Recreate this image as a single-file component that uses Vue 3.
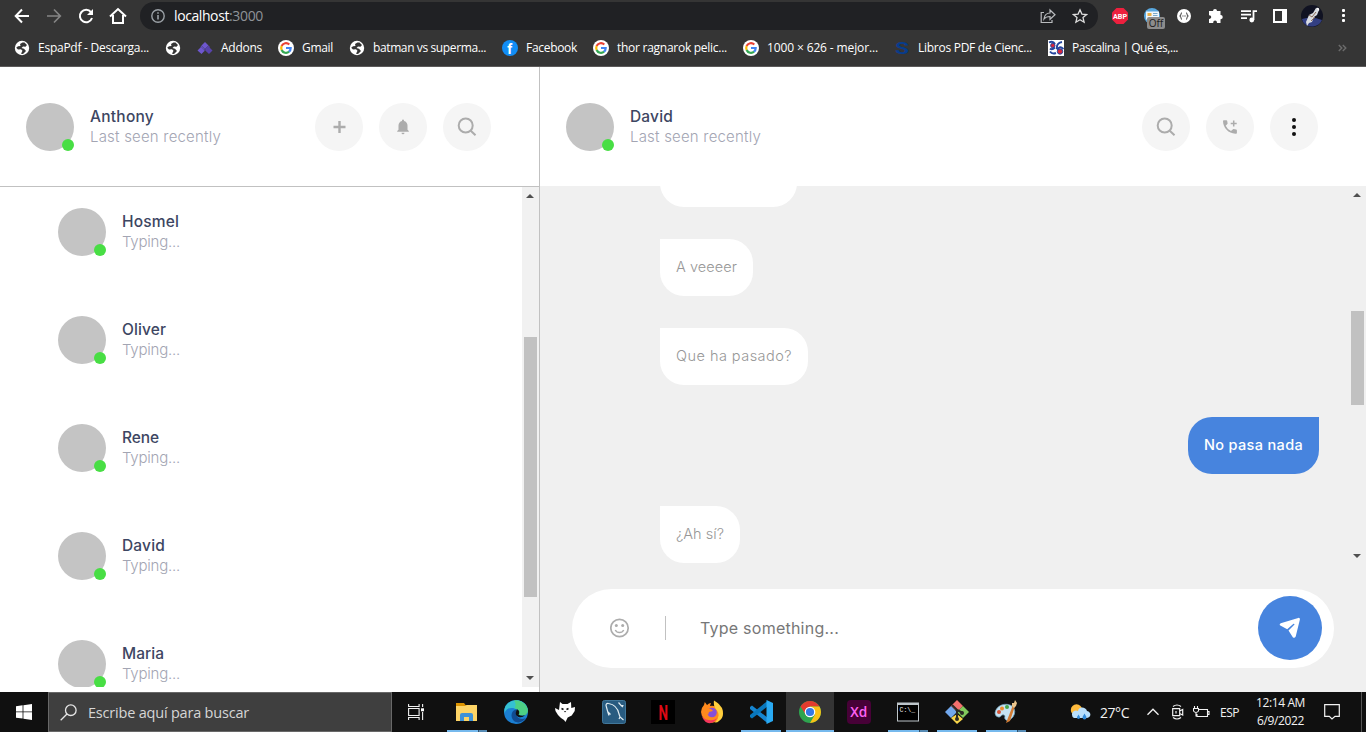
<script setup>
// Spreads a label's letters so that it fills a given width in pixels.
const vFit = {
  mounted(el, { value }) {
    const natural = el.getBoundingClientRect().width
    const count = [...el.textContent].length
    el.style.letterSpacing = (value - natural) / count + 'px'
    el.style.width = value + 'px'
  }
}

const bookmarks = [
  { icon: 'globe', text: 'EspaPdf - Descarga...', w: 111 },
  { icon: 'globe' },
  { icon: 'addons', text: 'Addons', w: 41 },
  { icon: 'google', text: 'Gmail', w: 31 },
  { icon: 'globe', text: 'batman vs superma...', w: 113 },
  { icon: 'facebook', text: 'Facebook', w: 51 },
  { icon: 'google', text: 'thor ragnarok pelic...', w: 110 },
  { icon: 'google', text: '1000 × 626 - mejor...', w: 111 },
  { icon: 'books', text: 'Libros PDF de Cienc...', w: 114 },
  { icon: 'pascal', text: 'Pascalina | Qué es,...', w: 106 }
]

const contacts = [
  { name: 'Hosmel', w: 57 },
  { name: 'Oliver', w: 44 },
  { name: 'Rene', w: 37 },
  { name: 'David', w: 43 },
  { name: 'Maria', w: 42 }
]

const messages = [
  { text: 'A veeeer', w: 61 },
  { text: 'Que ha pasado?', w: 116 },
  { text: 'No pasa nada', w: 99, mine: true },
  { text: '¿Ah sí?', w: 48 }
]

const apps = [
  { id: 'explorer', state: 'multi' },
  { id: 'edge' },
  { id: 'fox' },
  { id: 'mysql' },
  { id: 'netflix' },
  { id: 'firefox' },
  { id: 'vscode', state: 'open' },
  { id: 'chrome', state: 'active' },
  { id: 'xd' },
  { id: 'cmd', state: 'multi' },
  { id: 'git', state: 'open' },
  { id: 'paint', state: 'multi' }
]
</script>

<template>
  <div class="screen">
    <header class="browser">
      <div class="toolbar">
        <div class="nav">
          <svg width="16" height="16" viewBox="0 0 16 16" fill="none" stroke="#fff" stroke-width="2"><path d="M15 8H2M8 1.500 1.700 8 8 14.500" /></svg>
          <svg width="16" height="16" viewBox="0 0 16 16" fill="none" stroke="#858585" stroke-width="1.700"><path d="M1 8h13M8 1.500 14.300 8 8 14.500" /></svg>
          <svg width="16" height="16" viewBox="0 0 16 16"><path d="M13 4.200A6.200 6.200 0 1 0 14 10" fill="none" stroke="#fff" stroke-width="2" /><path d="M15 1v6H9z" fill="#fff" /></svg>
          <svg class="home" width="18" height="18" viewBox="0 0 18 18" fill="none" stroke="#fff" stroke-width="2"><path d="M1 9.500 9 2l8 7.500M4 8v8h10V8" /></svg>
        </div>
        <div class="address">
          <svg width="14" height="14" viewBox="0 0 14 14"><circle cx="7" cy="7" r="6.200" fill="none" stroke="#9aa0a6" stroke-width="1.400" /><path d="M7 6v4.500M7 3.200v1.600" stroke="#9aa0a6" stroke-width="1.600" /></svg>
          <span class="url"><span v-fit="55" class="fit">localhost</span><span v-fit="34" class="fit port">:3000</span></span>
          <svg class="share" width="16" height="16" viewBox="0 0 16 16" fill="none" stroke="#b9bbbe" stroke-width="1.200"><path d="M4 4.500H1.200v10H12V12" /><path d="M4 11c.5-4 2.500-6 6-6V2l5 4.800-5 4.500V8.500C7.500 8.500 5.500 9 4 11z" /></svg>
          <svg class="star" width="16" height="16" viewBox="0 0 16 16" fill="none" stroke="#dedede" stroke-width="1.300"><path d="m8 1.800 1.900 4.300 4.700.4-3.600 3.100 1.100 4.600L8 11.800l-4.100 2.400L5 9.600 1.400 6.500l4.700-.4z" /></svg>
        </div>
        <div class="extensions">
          <svg width="18" height="18" viewBox="0 0 18 18"><path d="M5.500 1h7L17 5.500v7L12.500 17h-7L1 12.500v-7z" fill="#ee203e" /><text x="2" y="11.900" textLength="14" lengthAdjust="spacingAndGlyphs" font-size="8" font-weight="700" font-family="Roboto, sans-serif" fill="#fff">ABP</text></svg>
          <div class="blocker">
            <svg width="18" height="18" viewBox="0 0 18 18"><circle cx="9" cy="9" r="8" fill="#5aa9e0" /><rect x="3" y="4.500" width="13" height="8" fill="#eef6fb" /><path d="M4.500 6h4v3h-4z" fill="#e9b04a" /><path d="M10 6.500h4.500M10 8.500h4.500" stroke="#7aa8c8" /></svg>
            <span>Off</span>
          </div>
          <svg width="16" height="16" viewBox="0 0 16 16"><circle cx="8" cy="8" r="7" fill="#fff" /><path d="M6 4.700C4.700 4.700 5.500 7 4 8c1.500 1 .7 3.300 2 3.300M10 4.700c1.300 0 .5 2.300 2 3.300-1.500 1-.7 3.300-2 3.300" fill="none" stroke="#555" stroke-width="1.100" /><path d="M6.300 8h3.500" stroke="#555" stroke-dasharray="1 .4" /></svg>
          <svg width="16" height="16" viewBox="0 0 16 16"><path d="M5 3a2 2 0 0 1 4 0h3.500v4a2 2 0 0 1 .3 4.200l-.3 0V15H9c.2-3.300-4-3.300-3.800 0H1v-4c3 .1 3-3.800 0-3.700V3z" fill="#fff" /></svg>
          <svg width="17" height="16" viewBox="0 0 17 16"><path d="M1 3.200h10M1 6.700h10M1 10.200h6" stroke="#fff" stroke-width="1.700" /><path d="M13.500 12V3.200H17" fill="none" stroke="#fff" stroke-width="1.800" /><circle cx="11.800" cy="12" r="2.400" fill="#fff" /></svg>
          <svg width="14" height="14" viewBox="0 0 14 14"><path d="M0 0h14v14H0z" fill="#fff" /><path d="M2 2h7v10H2z" fill="#353535" /></svg>
          <svg width="22" height="22" viewBox="0 0 22 22"><circle cx="11" cy="11" r="11" fill="#101222" /><path d="M1 14q10-3 20 1a11 11 0 0 1-19 2z" fill="#333f82" /><path d="m5 17 3-7 4-2 3-5 3 2-2 5-3 2-2 5-3 1-2 3z" fill="#d9dce2" /><path d="m8 10 3 2 4-5M10 16l4-4" stroke="#8e6d57" fill="none" /><path d="M15 3q4-1 3 3" fill="#fff" /></svg>
          <svg width="4" height="14" viewBox="0 0 4 14" fill="#fff"><rect y="0" width="3" height="3" rx="1" /><rect y="5" width="3" height="3" rx="1" /><rect y="10" width="3" height="3" rx="1" /></svg>
        </div>
      </div>

      <div class="bookmarks">
        <div v-for="(b, i) in bookmarks" :key="i" class="bookmark">
          <svg width="16" height="16" viewBox="0 0 16 16">
            <template v-if="b.icon === 'globe'">
              <circle cx="8" cy="8" r="7.200" fill="#fff" />
              <path d="M8.500 2.500 6 4 6.500 6 4 6.200 2.200 7.800 4 9.500l3-.2 1.500 1.500-1.500 3 2 .3 3-3-2-2.300L7.500 8 9 6.500l2.500.2L13 5l-2.500-2.500z" fill="#353535" />
            </template>
            <template v-else-if="b.icon === 'addons'">
              <path d="m8 2 3.500 3.500L8 9 4.500 5.500z" fill="#6e57cf" /><path d="m4 7 3.800 3.800L4.500 14 .5 10.500z" fill="#6e57cf" /><path d="m12 7 3.500 3.500L12 14 8.200 10.500z" fill="#5843ac" /><path d="M4.500 5.500 8 9l-1 1.500L3.500 7z" fill="#6250bb" /><path d="m8 9 3.500-3.500L13 7l-4 4z" fill="#5843ac" />
            </template>
            <template v-else-if="b.icon === 'google'">
              <circle cx="8" cy="8" r="8" fill="#fff" />
              <g fill="none" stroke-width="2.200">
                <path d="M11.300 4.500A4.800 4.800 0 0 0 3.600 6" stroke="#ea4335" />
                <path d="M3.700 5.900a4.800 4.800 0 0 0 0 4.200" stroke="#fbbc05" />
                <path d="M3.600 10a4.800 4.800 0 0 0 7.500 1.700" stroke="#34a853" />
                <path d="M11 11.700A4.800 4.800 0 0 0 12.700 8H8" stroke="#4285f4" />
              </g>
            </template>
            <template v-else-if="b.icon === 'facebook'">
              <circle cx="8" cy="8" r="8" fill="#118df5" />
              <text x="5.200" y="13.500" font-size="14" font-weight="700" font-family="Roboto, sans-serif" fill="#fff">f</text>
            </template>
            <template v-else-if="b.icon === 'books'">
              <text x="1" y="13.800" font-size="16.500" font-weight="700" textLength="14" lengthAdjust="spacingAndGlyphs" font-family="Roboto, sans-serif" fill="#083c8c">S</text>
            </template>
            <template v-else>
              <path d="M0 0h16v16H0z" fill="#fff" />
              <path d="M1 2.500q4-2 6 1.500M2 8.500q2 2 5-1M9 9q-1-6 5-7M15.500 9q-4-4-6 1M2 11.500q2 3 6 1.500" fill="none" stroke="#24459e" stroke-width="1.900" />
              <circle cx="4.800" cy="5.500" r="2.200" fill="#d7263d" stroke="#24459e" /><circle cx="12" cy="11.500" r="2.700" fill="#d7263d" stroke="#24459e" />
            </template>
          </svg>
          <span v-if="b.text" v-fit="b.w" class="fit">{{ b.text }}</span>
        </div>
        <svg class="more" width="9" height="8" viewBox="0 0 9 8" fill="none" stroke="#6c6c6c" stroke-width="1.400"><path d="m.8 1 3 3-3 3M4.800 1l3 3-3 3" /></svg>
      </div>
    </header>

    <main class="app">
      <section class="sidebar">
        <div class="head">
          <div class="avatar"><i /></div>
          <div class="who">
            <span v-fit="64" class="fit name">Anthony</span>
            <span v-fit="131" class="fit status">Last seen recently</span>
          </div>
          <div class="actions">
            <button><svg width="14" height="14" viewBox="0 0 14 14"><path d="M7.500 1v12M1.500 7h12" stroke="#acacac" stroke-width="2.400" /></svg></button>
            <button><svg width="14" height="16" viewBox="0 0 14 16" fill="#acacac"><path d="M7 .5a1 1 0 0 1 1 1v.4c2.200.5 3.500 2.300 3.500 4.600v4.300l1.300 1.300v.7H1.200v-.7l1.300-1.300V6.500c0-2.300 1.300-4.100 3.500-4.600v-.4a1 1 0 0 1 1-1zM5.500 13.700h3a1.500 1.500 0 0 1-3 0z" /></svg></button>
            <button><svg width="20" height="20" viewBox="0 0 20 20" fill="none" stroke="#acacac" stroke-width="2"><circle cx="8.700" cy="8.500" r="7" /><path d="m13.500 13.500 5 4.700" /></svg></button>
          </div>
        </div>
        <div class="contacts">
          <div class="list">
            <div v-for="c in contacts" :key="c.name" class="contact">
              <div class="avatar"><i /></div>
              <div class="who">
                <span v-fit="c.w" class="fit name">{{ c.name }}</span>
                <span v-fit="58" class="fit status">Typing...</span>
              </div>
            </div>
          </div>
          <div class="scrollbar contacts-bar"><b class="up" /><div class="thumb" /><b class="down" /></div>
        </div>
      </section>

      <section class="conversation">
        <div class="head">
          <div class="avatar"><i /></div>
          <div class="who">
            <span v-fit="43" class="fit name">David</span>
            <span v-fit="131" class="fit status">Last seen recently</span>
          </div>
          <div class="actions">
            <button><svg width="20" height="20" viewBox="0 0 20 20" fill="none" stroke="#acacac" stroke-width="2"><circle cx="8.700" cy="8.500" r="7" /><path d="m13.500 13.500 5 4.700" /></svg></button>
            <button><svg width="16" height="16" viewBox="0 0 16 16"><path d="M1.800 1.300h2.600q.7 0 .8.700l.4 2.200q.1.500-.3.900L3.700 6.700q1.600 3.400 5.300 5.400l1.700-1.700q.4-.4.900-.3l2.500.5q.8.100.8.800v2.500q0 .7-.8.800C7 15.200 1 9 1 2.100q0-.8.800-.8z" fill="#acacac" /><path d="M11.700 1.500v6M8.700 4.500h6" stroke="#acacac" stroke-width="1.500" /></svg></button>
            <button><svg width="6" height="20" viewBox="0 0 6 20" fill="#111"><circle cx="3" cy="3" r="2" /><circle cx="3" cy="10" r="2" /><circle cx="3" cy="17" r="2" /></svg></button>
          </div>
        </div>
        <div class="chat">
          <div class="messages">
            <div class="bubble partial" />
            <div v-for="m in messages" :key="m.text" class="bubble" :class="{ mine: m.mine }"><span v-fit="m.w" class="fit">{{ m.text }}</span></div>
          </div>
          <div class="scrollbar chat-bar"><b class="up" /><div class="thumb" /><b class="down" /></div>
        </div>
        <div class="composer">
          <svg class="smile" width="20" height="20" viewBox="0 0 20 20" fill="none" stroke="#acacac" stroke-width="1.700"><circle cx="9.500" cy="10" r="8.700" /><path d="M5.300 12a4.700 4.700 0 0 0 8.400 0" stroke-width="1.500" /><g fill="#acacac" stroke="none"><circle cx="6.300" cy="7.500" r="1.500" /><circle cx="12.700" cy="7.500" r="1.500" /></g></svg>
          <div class="divider" />
          <span v-fit="139" class="fit placeholder">Type something...</span>
          <div class="send"><svg width="22" height="22" viewBox="0 0 22 22" fill="#fff"><path d="M1.700 6.200 19.200.9q1.900-.4 1.700 1.500L16.700 19.500q-1.200 2.200-2.900.7L9.500 13.600l6-6.100q0-1-1-.8L8.200 12.300.9 8.300q-.8-1.300.8-2.100z" /></svg></div>
        </div>
      </section>
    </main>

    <footer class="taskbar">
      <div class="start"><svg width="16" height="16" viewBox="0 0 16 16" fill="#fff"><path d="M0 2.300 6.600 1.300v6.200H0zM7.400 1.200 16 0v7.500H7.400zM0 8.300h6.600v6.300L0 13.700zM7.400 8.300H16V16l-8.600-1.200z" /></svg></div>
      <div class="search">
        <svg width="17" height="17" viewBox="0 0 17 17" fill="none" stroke="#e6e6e6" stroke-width="1.300"><circle cx="10.800" cy="6.200" r="5.300" /><path d="M7 10 .7 16.300" /></svg>
        <span v-fit="161" class="fit">Escribe aquí para buscar</span>
      </div>
      <div class="taskview"><svg width="17" height="16" viewBox="0 0 17 16" fill="none" stroke="#f2f2f2" stroke-width="1.100"><path d="M.6 0v2.500h10.500V0M.6 4.500h10.500v7H.6zM.6 16v-2.500h10.500V16M14.600 0v3M14.600 8v8" /><path d="M13 4.300h3v3h-3z" fill="#fff" stroke="none" /></svg></div>
      <div class="apps">
        <div v-for="a in apps" :key="a.id" class="slot" :class="a.state">
          <svg width="24" height="24" viewBox="0 0 24 24">
            <template v-if="a.id === 'explorer'">
              <path d="M1 3h8l1.500 2H22v4H1z" fill="#dc9300" /><path d="M1 6h9l2-1h10v16H1z" fill="#fdd466" /><path d="M5 21v-6q0-2 2-2h9q2 0 2 2v6h-4v-4H9v4z" fill="#3e92d8" />
            </template>
            <template v-else-if="a.id === 'edge'">
              <circle cx="12" cy="12" r="12" fill="#1b7fd2" />
              <path d="M.5 9C3-2 20-3 23.500 8c1.500 5-4 9-9 6.500 1-2 .5-4-1.500-5C9 7 3 7 .5 13z" fill="#35c1d2" />
              <path d="M10 .2c9-.8 15 7 13.800 12-1.300 4-6 4-9.300 2.500 2-3-1-6-4-6.500Q13 4 10 .2z" fill="#56d66b" opacity=".75" />
              <path d="M13.500 9.500c-6-.5-8 7-3.500 11.500 4 3 9 1 12-3-6 3-12-1-8.500-8.500z" fill="#114b91" />
              <path d="M13.500 9.500q3 2 1 5.200 3 1.600 6.500.6-3 3-7 1.500-4-2-1-7.300z" fill="#111" />
            </template>
            <template v-else-if="a.id === 'fox'">
              <path d="m7 2 2.500 2h5L18 2l.3 6 3.700-1-.3 4-3 4.500-4 2-2.200 4.500-1.500-2-3-2-3-3-2.500-4L2 8l4 2z" fill="#fff" /><path d="m8.500 8.500 2 1M13.500 9.500l2-1" stroke="#111" stroke-width="1.500" /><path d="M11 11h2.200L12 12.500z" fill="#111" />
            </template>
            <template v-else-if="a.id === 'mysql'">
              <rect x=".5" y=".5" width="23" height="23" rx="2" fill="#285b80" stroke="#41779a" /><path d="M7 15.500 5.800 12 4 5.500Q4 3 6.500 3.500C13 4.500 16 9 17 14l1 3 3.500 3M18 17l-1 2M6 12l2.500 2.500M16.500 2.500l2.500 3h2.500M19 5.500l2 1.500" fill="none" stroke="#e1ecf1" stroke-width="1.200" />
            </template>
            <template v-else-if="a.id === 'netflix'">
              <path d="M0 0h24v24H0z" fill="#000" /><text x="7.400" y="19.500" font-size="21" font-weight="700" textLength="9.500" lengthAdjust="spacingAndGlyphs" font-family="Roboto, sans-serif" fill="#df0914">N</text>
            </template>
            <template v-else-if="a.id === 'firefox'">
              <path d="M1 12Q1 8 4 5l.8-3L7 5q2-2 4-2l-1 3q6-1 9 4l3-1q2 7-3 11-6 5-13 1-4-3-5-9z" fill="#ff8a1d" /><path d="M14 .5q5 3 6 5l2 2.500q3 9-3 13-2 2-4 1.500 6-6 2-12-4-4-3-10z" fill="#ffcf3d" /><path d="M1 12q1 8 8 8 5 1 8-2-3 6-9 5-6-2-7-11z" fill="#f5375b" /><circle cx="12" cy="12.500" r="4.800" fill="#8650d8" /><path d="m5 8 6 1 2 2-4 1-1 3q-3-3-3-7z" fill="#ff8a1d" />
            </template>
            <template v-else-if="a.id === 'vscode'">
              <path d="m1 7 2-1.500L19 18v5.500L1 9z" fill="#1685d0" /><path d="m1 17 2 1.500L19 6V.5L1 15z" fill="#0877bd" /><path d="m17.500 0 6.500 3v18l-6.500 3z" fill="#29a9f2" />
            </template>
            <template v-else-if="a.id === 'chrome'">
              <g transform="translate(1 1)"><circle cx="11" cy="11" r="11" fill="#2ea44f" /><path d="M1.500 5.500a11 11 0 0 1 19 0H11L7 14z" fill="#e33b2e" /><path d="M20.500 5.500A11 11 0 0 1 11 22l5-8.500-5-8z" fill="#fbc116" /><circle cx="11" cy="11" r="5.300" fill="#fff" /><circle cx="11" cy="11" r="4.100" fill="#3478e5" /></g>
            </template>
            <template v-else-if="a.id === 'xd'">
              <rect width="24" height="24" rx="4" fill="#470137" /><text x="3.300" y="17" font-size="14" font-weight="600" textLength="17" lengthAdjust="spacingAndGlyphs" font-family="Open Sans, sans-serif" fill="#ff61f6">Xd</text>
            </template>
            <template v-else-if="a.id === 'cmd'">
              <path d="M1 2.500h22v19H1z" fill="#bcc4c9" /><path d="M2 5h20v15.500H2z" fill="#000" /><text x="3.500" y="11.500" font-size="6.500" font-family="Liberation Mono, monospace" fill="#eee">C:\_</text>
            </template>
            <template v-else-if="a.id === 'git'">
              <path d="m12 0 6 6-4 4h-4L6 6z" fill="#f36f6e" /><path d="m6 6 5 5v2l-5 5-6-6z" fill="#72a8ed" /><path d="m18 6 6 6-6 6-5-5v-2z" fill="#82c95c" /><path d="m12 14 6 5-6 5-6-6z" fill="#f9d64a" /><path d="m7 5 5 5v9M12 10l6 3" fill="none" stroke="#2c2a25" stroke-width="2" /><circle cx="12" cy="19" r="2" fill="#2c2a25" /><circle cx="17" cy="13" r="2" fill="#2c2a25" />
            </template>
            <template v-else>
              <path d="M1 13C2 5 12 2 18 6q5 5 1 11-5 6-8 2c-1-2 1-3-1-4-3-1-3 3-6 2q-3-1-3-4z" fill="#c5e2f2" stroke="#6c9eb8" stroke-width=".7" /><circle cx="5" cy="12" r="2" fill="#d65337" /><circle cx="8" cy="8.500" r="2" fill="#ee8b2e" /><circle cx="13" cy="7" r="2" fill="#45a648" /><path d="m12 23 7-18 2 1-5 15z" fill="#d27c35" /><path d="m18 6 0-3 2 0 1-3 2 3-1 3-2 2z" fill="#e9c48b" />
            </template>
          </svg>
        </div>
      </div>
      <div class="tray">
        <svg class="weather" width="21" height="17" viewBox="0 0 21 17"><circle cx="6.500" cy="6" r="5.700" fill="#ffbb3d" /><path d="M4 14a4 4 0 0 1 0-7q2-1 4 0c1-5 8-4 9 0 5 1 4 7 0 7z" fill="#b9dffc" /><path d="M8.500 10.500 7 13q-.3 2 1.500 2t1.500-2zM14.500 9.500 12.500 13q0 2.500 2 2.500t2-2.500z" fill="#338bda" /></svg>
        <span v-fit="29" class="fit temp">27°C</span>
        <svg class="chevron" width="12" height="8" viewBox="0 0 12 8" fill="none" stroke="#f2f2f2" stroke-width="1.300"><path d="m.5 6.700 5.500-5.500 5.500 5.500" /></svg>
        <svg class="cam" width="12" height="16" viewBox="0 0 12 16" fill="none" stroke="#f2f2f2" stroke-width="1.200"><path d="M1 2.500q4-3 8 0M1 13.500q4 3 8 0M.7 4.700h7v7h-7zM7.700 7l3-1.500v5.500l-3-1.500M4 7v2.500" /></svg>
        <svg class="battery" width="17" height="12" viewBox="0 0 17 12" fill="none" stroke="#f2f2f2" stroke-width="1.100"><path d="M6 3.500h8.500v7H4V8M14.500 5.500H16v3h-1.500M1.500 0v2.500M4.500 0v2.500M.5 2.500h5V5Q3 8 .5 5zM3 6v4.500" /></svg>
        <span v-fit="19" class="fit lang">ESP</span>
        <div class="clock"><span v-fit="49" class="fit">12:14 AM</span><span v-fit="47" class="fit">6/9/2022</span></div>
        <svg class="notice" width="16" height="16" viewBox="0 0 16 16" fill="none" stroke="#f2f2f2" stroke-width="1.200"><path d="M.7.700h14.600v11.600h-4.300L8 15l-2.700-2.700H.7z" /></svg>
      </div>
    </footer>
  </div>
</template>

<style>
body { margin: 0; overflow: hidden; }
</style>

<style scoped>
.screen { width: 1366px; height: 732px; display: flex; flex-direction: column; overflow: hidden; background: #fff; font-family: "Open Sans", sans-serif; }
.screen * { box-sizing: border-box; }
svg { display: block; flex: none; }
.fit { display: inline-block; white-space: nowrap; flex: none; }

.browser { height: 67px; flex: none; background: #353535; border-bottom: 1px solid #5c5a5a; color: #fff; }
.toolbar { height: 32px; display: flex; align-items: center; }
.nav { width: 140px; padding-left: 14px; display: flex; align-items: center; gap: 16px; }
.home { margin-left: -1px; }
.address { width: 958px; height: 28px; border-radius: 14px; background: #202124; display: flex; align-items: center; padding: 0 10px 0 11px; }
.url { display: flex; margin-left: 9px; font-size: 14px; line-height: 20px; }
.port { color: #8f9398; }
.share { margin-left: auto; }
.star { margin-left: 16px; }
.extensions { display: grid; grid-template-columns: repeat(8, 32px); align-items: center; justify-items: center; padding-left: 6px; }
.blocker { position: relative; width: 18px; height: 18px; }
.blocker span { position: absolute; left: 4px; top: 10px; width: 18px; height: 12px; border-radius: 2px; background: #8c8c8c; color: #1d1d1d; font-size: 10px; line-height: 12px; text-align: center; }
.bookmarks { height: 32px; display: flex; align-items: center; gap: 16px; padding: 0 19px 0 14px; font-size: 12px; }
.bookmark { height: 16px; display: flex; align-items: center; gap: 8px; line-height: 16px; }
.more { margin-left: auto; }

.app { height: 625px; flex: none; display: flex; }
.sidebar { width: 540px; border-right: 1px solid #c1c1c1; }
.head { height: 119px; padding: 0 48px 0 26px; display: flex; align-items: center; gap: 16px; background: #fff; }
.sidebar .head { height: 120px; border-bottom: 1px solid #c1c1c1; }
.avatar { position: relative; width: 48px; height: 48px; border-radius: 50%; background: #c4c4c4; flex: none; }
.avatar i { position: absolute; right: 0; bottom: 0; width: 12px; height: 12px; border-radius: 50%; background: #48de44; }
.who { display: flex; flex-direction: column; align-items: flex-start; font-family: Inter, sans-serif; }
.name { font-size: 15.500px; font-weight: 500; line-height: 20px; color: #3d4662; }
.status { font-size: 15px; font-weight: 300; line-height: 20px; color: #a3a5b3; }
.actions { margin-left: auto; display: flex; gap: 16px; }
.actions button { width: 48px; height: 48px; border: 0; padding: 0; border-radius: 50%; background: #f5f5f5; display: flex; align-items: center; justify-content: center; }
.contacts { height: 500px; display: flex; overflow: hidden; }
.list { flex: 1; padding: 21px 0 0 58px; }
.contact { height: 48px; margin-bottom: 60px; display: flex; align-items: center; gap: 16px; }

.scrollbar { width: 17px; display: flex; flex-direction: column; align-items: center; background: #f1f1f1; flex: none; }
.scrollbar b { width: 0; height: 0; margin-right: 1px; border: 4px solid transparent; flex: none; }
.scrollbar .up { border-top-width: 0; border-bottom-color: #505050; }
.scrollbar .down { margin-top: auto; border-bottom-width: 0; border-top-color: #505050; }
.thumb { width: 13px; background: #c1c1c1; flex: none; }
.contacts-bar .up { margin-top: 7px; }
.contacts-bar .down { margin-bottom: 7px; }
.contacts-bar .thumb { height: 260px; margin-top: 139px; }
.scrollbar.chat-bar { background: #f0f0f0; }
.chat-bar .up { margin-top: 7px; }
.chat-bar .down { margin-bottom: 5px; }
.chat-bar .thumb { height: 94px; margin-top: 114px; }

.conversation { flex: 1; display: flex; flex-direction: column; background: #f0f0f0; }
.chat { height: 377px; display: flex; overflow: hidden; }
.messages { flex: 1; padding: 0 30px 0 120px; display: flex; flex-direction: column; justify-content: flex-end; align-items: flex-start; gap: 32px; }
.bubble { height: 57px; flex: none; padding: 17px 16px 19px; border-radius: 0 24px 24px 24px; background: #fff; color: #979797; font: 300 14.500px/21px Inter, sans-serif; display: flex; }
.bubble.partial { width: 137px; }
.bubble.mine { align-self: flex-end; border-radius: 24px 0 24px 24px; background: #4784de; color: #fff; font-weight: 500; }
.composer { height: 79px; margin: 26px 32px 24px; padding: 0 12px 1px 38px; border-radius: 40px; background: #fff; display: flex; align-items: center; }
.divider { width: 1px; height: 24px; margin: 0 34px 0 35px; background: #c1c1c1; }
.placeholder { font: 400 16px/24px Inter, sans-serif; color: #777; }
.send { width: 64px; height: 64px; margin-left: auto; border-radius: 50%; background: #4784de; display: flex; align-items: center; justify-content: center; }

.taskbar { height: 40px; flex: none; background: #101010; display: flex; color: #f2f2f2; }
.start { width: 48px; display: flex; align-items: center; justify-content: center; }
.search { width: 344px; padding-left: 11px; display: flex; align-items: center; gap: 11px; background: #3f3f3f; border: 1px solid #686868; font-size: 14.500px; color: #d6d6d6; }
.taskview { width: 51px; padding-left: 16px; display: flex; align-items: center; }
.apps { display: flex; gap: 1px; }
.slot { position: relative; width: 48px; display: flex; align-items: center; justify-content: center; }
.slot.open::after, .slot.multi::after, .slot.active::after { content: ""; position: absolute; left: 4px; right: 4px; bottom: 0; height: 2px; background: #76b9ed; }
.slot.multi::after { background: linear-gradient(90deg, #76b9ed 31px, #30506a 31px, #30506a 32px, #568ab3 32px); }
.slot.active { background: #343434; }
.slot.active::after { left: 0; right: 0; }
.tray { display: flex; align-items: center; flex: 1; margin: 0 4px 0 40px; border-right: 1px solid #555; }
.temp { margin-left: 9px; font-size: 14px; }
.chevron { margin-left: 18px; }
.cam { margin-left: 13px; }
.battery { margin-left: 9px; }
.lang { margin-left: 10px; font-size: 12px; }
.clock { margin-left: 17px; width: 49px; display: flex; flex-direction: column; align-items: center; font-size: 12px; line-height: 18px; }
.notice { margin-left: 19px; }
</style>
